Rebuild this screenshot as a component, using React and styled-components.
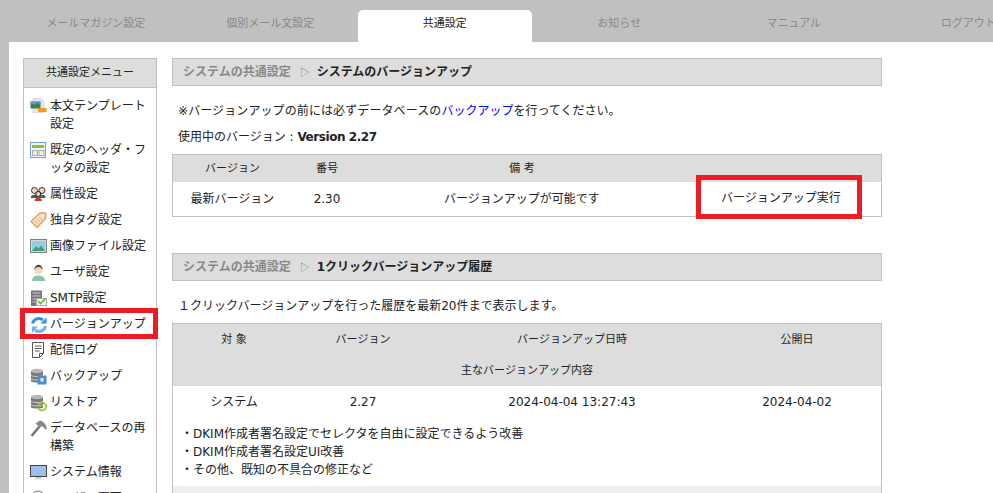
import styled, { createGlobalStyle } from "styled-components";

const GlobalStyle = createGlobalStyle`
  html, body {
    margin: 0;
    height: 493px;
    overflow: hidden;
    background-color: #c0c0c0;
    color: #222;
    font-family: "DejaVu Sans", "Noto Sans CJK JP", sans-serif;
    font-size: 12px;
    line-height: 18px;
  }
`;

const TabBar = styled.div`
  display: flex;
  height: 32px;
  padding: 10px 0 0 8.5px;
  width: 1100px;
`;

const Tab = styled.div`
  flex: 0 0 174.5px;
  height: 32px;
  line-height: 28px;
  font-size: 11px;
  text-align: center;
  color: ${(props) => (props.$active ? "#222" : "#888")};
  background-color: ${(props) => (props.$active ? "#fff" : "transparent")};
  border-radius: 5px 5px 0 0;
`;

const Page = styled.div`
  display: flex;
  align-items: flex-start;
  gap: 15px;
  margin-left: 9px;
  padding: 16px 0 0 14px;
  background-color: #fff;
  height: 500px;
`;

const Sidebar = styled.div`
  flex: 0 0 132px;
  border: 1px solid #c0c0c0;
  border-bottom: 0;
`;

const SideHead = styled.div`
  height: 28px;
  line-height: 27px;
  font-size: 11px;
  text-align: center;
  background-color: #ddd;
  border-bottom: 1px solid #c0c0c0;
`;

const SideList = styled.ul`
  list-style: none;
  margin: 0;
  padding: 5px 0 0;
`;

const SideItem = styled.li`
  position: relative;
  display: flex;
  padding: 4px 6px 4px 6px;
  &::after {
    content: ${(props) => (props.$marked ? '""' : "none")};
    position: absolute;
    left: -4px;
    right: -2px;
    top: -3px;
    bottom: -2px;
    border: 5px solid #ed1c24;
  }
`;

const IconBox = styled.span`
  flex: 0 0 20px;
  height: 18px;
  svg {
    display: block;
    margin-top: 1px;
  }
`;

const Main = styled.div`
  flex: 0 0 710px;
`;

const PanelHead = styled.div`
  box-sizing: border-box;
  height: 28px;
  line-height: 26px;
  padding-left: 10px;
  font-weight: bold;
  background-color: #ddd;
  border: 1px solid #c0c0c0;
`;

const Crumb = styled.span`
  color: #888;
`;

const CrumbArrow = styled.span`
  display: inline-block;
  box-sizing: border-box;
  width: 26px;
  padding-left: 2px;
  text-align: center;
  font-family: "Noto Sans CJK JP", sans-serif;
  font-size: 10px;
  font-weight: normal;
  color: #777;
`;

const Intro = styled.p`
  margin: ${(props) => (props.$first ? "16px" : "8px")} 0 0 6px;
`;

const SpacedText = styled.span`
  letter-spacing: 0.1px;
`;

const BlueLink = styled.a`
  color: #0000ff;
  text-decoration: none;
`;

const VersionNo = styled.b`
  letter-spacing: -0.45px;
`;

const Table = styled.table`
  width: 710px;
  margin: 8px 0 36px;
  border-collapse: separate;
  border-spacing: 0;
  table-layout: fixed;
  border: 1px solid #c0c0c0;
`;

const HeadCell = styled.th`
  height: ${(props) => props.$h}px;
  padding: 0;
  font-size: 11px;
  font-weight: normal;
  text-align: center;
  vertical-align: middle;
  background-color: ${(props) => props.$bg || "#ddd"};
`;

const Cell = styled.td`
  position: relative;
  height: ${(props) => props.$h}px;
  padding: 0;
  text-align: center;
  vertical-align: middle;
`;

const MarkedButton = styled.div`
  position: absolute;
  left: 14px;
  top: -7px;
  width: 166px;
  height: 44px;
  box-sizing: border-box;
  border: 5px solid #ed1c24;
  line-height: 36px;
  text-align: center;
  padding-left: 4px;
`;

const NoteCell = styled.td`
  padding: 8px 0 7px 8px;
  text-align: left;
`;

const Note = styled.div`
  height: 18px;
`;

const Icon = ({ children }) => (
  <IconBox>
    <svg width="18" height="18" viewBox="0 0 18 18">
      {children}
    </svg>
  </IconBox>
);

const TemplateIcon = () => (
  <Icon>
    <path d="M3 0.5h8l3 3v11H3z" fill="#e8e8e8" stroke="#d8d8d8" />
    <rect x="0.5" y="3.500" width="10" height="7" fill="#3f7f5a" />
    <path d="M0.5 3.500h10v3l-3-2-3 2-4-1z" fill="#5f9fd0" />
    <rect x="8" y="10" width="8.5" height="4" fill="#f59a1b" />
  </Icon>
);

const HeaderFooterIcon = () => (
  <Icon>
    <rect x="0.5" y="0.5" width="15" height="15" fill="#f4f4f4" stroke="#6f9fe0" />
    <rect x="2" y="3" width="12" height="3" fill="#7cc63a" />
    <rect x="2.5" y="8.5" width="5" height="5" fill="#eee" stroke="#aaa" />
    <rect x="9" y="8.5" width="5" height="5" fill="#eee" stroke="#aaa" />
  </Icon>
);

const PeopleIcon = () => (
  <Icon>
    <circle cx="4.5" cy="4.5" r="3" fill="#f0d8c8" stroke="#333" />
    <circle cx="12" cy="4.5" r="3" fill="#f0d8c8" stroke="#333" />
    <path d="M1 11c0-3 7-3 7 0v1H1zM8.5 11c0-3 7-3 7 0v1h-7z" fill="#555" />
    <circle cx="8.2" cy="8" r="2.5" fill="#f0d8c8" stroke="#222" />
    <path d="M4.5 15c0-4.500 7.500-4.500 7.500 0z" fill="#c0392b" />
  </Icon>
);

const TagIcon = () => (
  <Icon>
    <path d="M1 9.500L10 1h5.500v5.500L7 15.500z" fill="#f5e0c5" stroke="#e8a050" strokeWidth="1.400" />
    <path d="M5 9l3 3M7 7l3 3M9 5l3 3" stroke="#c9b8a0" />
    <circle cx="12.800" cy="3.700" r="1" fill="#fff" />
  </Icon>
);

const ImageIcon = () => (
  <Icon>
    <rect x="0.500" y="1.500" width="16" height="13" fill="#d8d8d8" stroke="#808080" />
    <rect x="2" y="3" width="13" height="10" fill="#8fd0e8" />
    <path d="M2 13l4-5 2.500 2.500L11 7.500 15 13z" fill="#3fa070" />
  </Icon>
);

const UserIcon = () => (
  <Icon>
    <path d="M2 17c0-4 3-5.500 6.500-5.500S15 13 15 17z" fill="#8fc4a8" />
    <circle cx="8.500" cy="6" r="4" fill="#f2d8b8" />
    <path d="M4.500 6c-.5-7 8.500-7 8 0-1-2-2-3-4-3s-3 1-4 3z" fill="#4a4a3a" />
  </Icon>
);

const SmtpIcon = () => (
  <Icon>
    <rect x="1" y="0.500" width="11" height="15.500" fill="#777" />
    <path d="M2.500 3h8M2.500 6h8M2.500 9h5M2.500 12h4" stroke="#ccc" />
    <rect x="6.500" y="8.500" width="10" height="7" fill="#f4f4f4" stroke="#aaa" />
    <path d="M8 11l2.500 2.500 5-5" fill="none" stroke="#5dbb3a" strokeWidth="1.600" />
  </Icon>
);

const RefreshIcon = () => (
  <Icon>
    <path d="M2.500 7.500a6.500 6.500 0 0 1 10.500-3.500" fill="none" stroke="#2f8fe0" strokeWidth="3" />
    <path d="M16.500 1.500v6h-6z" fill="#2f8fe0" />
    <path d="M15.500 10a6.500 6.500 0 0 1-10.500 4" fill="none" stroke="#6fb8ee" strokeWidth="3" />
    <path d="M2 17v-6.500h6z" fill="#6fb8ee" />
  </Icon>
);

const LogIcon = () => (
  <Icon>
    <path d="M2.500 0.500h11v11l-4 4h-7z" fill="#fff" stroke="#555" />
    <path d="M9.500 15.500v-4h4" fill="none" stroke="#555" />
    <path d="M5 4h6.500M5 6.500h6.500M5 9h4.500" stroke="#555" />
  </Icon>
);

const Database = () => (
  <>
    <path d="M1 3v10c0 2 12 2 12 0V3z" fill="#7a7a7a" />
    <ellipse cx="7" cy="3" rx="6" ry="2.200" fill="#b8b8b8" />
    <path d="M1 7c0 2 12 2 12 0M1 10.500c0 2 12 2 12 0" fill="none" stroke="#ccc" />
  </>
);

const BackupIcon = () => (
  <Icon>
    <Database />
    <rect x="7.500" y="7.500" width="9" height="9" fill="#4a8fd0" />
    <rect x="10.500" y="10" width="3" height="3.500" fill="#dcecf8" />
  </Icon>
);

const RestoreIcon = () => (
  <Icon>
    <Database />
    <path d="M8 12.500a4 4 0 0 1 7-2.500" fill="none" stroke="#8fd030" strokeWidth="2" />
    <path d="M15.500 10a4 4 0 0 1-7 4.500" fill="none" stroke="#8fd030" strokeWidth="2" />
  </Icon>
);

const HammerIcon = () => (
  <Icon>
    <path d="M1.500 16L9.500 6.500" stroke="#777" strokeWidth="2.600" />
    <path d="M5.500 3.500L10 0.500c3 .5 6 3.500 7 8l-1.500 1-3.500-3.500-2 1.500z" fill="#8a8a8a" />
  </Icon>
);

const MonitorIcon = () => (
  <Icon>
    <rect x="0.500" y="1.500" width="16" height="11" fill="#9cc0ec" stroke="#444" />
    <rect x="6" y="13" width="5" height="1.500" fill="#bbb" />
    <rect x="3.500" y="14.500" width="10" height="1" fill="#ddd" />
  </Icon>
);

const ClockIcon = () => (
  <Icon>
    <circle cx="8" cy="8" r="7" fill="#f4f4f4" stroke="#777" />
    <path d="M8 3.500V8h3.500" fill="none" stroke="#555" />
  </Icon>
);

const tabs = ["メールマガジン設定", "個別メール文設定", "共通設定", "お知らせ", "マニュアル", "ログアウト"];

const menu = [
  { label: "本文テンプレート設定", icon: TemplateIcon },
  { label: "既定のヘッダ・フッタの設定", icon: HeaderFooterIcon },
  { label: "属性設定", icon: PeopleIcon },
  { label: "独自タグ設定", icon: TagIcon },
  { label: "画像ファイル設定", icon: ImageIcon },
  { label: "ユーザ設定", icon: UserIcon },
  { label: "SMTP設定", icon: SmtpIcon },
  { label: "バージョンアップ", icon: RefreshIcon, marked: true },
  { label: "配信ログ", icon: LogIcon },
  { label: "バックアップ", icon: BackupIcon },
  { label: "リストア", icon: RestoreIcon },
  { label: "データベースの再構築", icon: HammerIcon },
  { label: "システム情報", icon: MonitorIcon },
  { label: "ユーザー画面", icon: ClockIcon },
];

export default function App() {
  return (
    <>
      <GlobalStyle />
      <TabBar>
        {tabs.map((tab) => (
          <Tab key={tab} $active={tab === "共通設定"}>
            {tab}
          </Tab>
        ))}
      </TabBar>
      <Page>
        <Sidebar>
          <SideHead>共通設定メニュー</SideHead>
          <SideList>
            {menu.map((item) => (
              <SideItem key={item.label} $marked={item.marked}>
                <item.icon />
                <span>{item.label}</span>
              </SideItem>
            ))}
          </SideList>
        </Sidebar>
        <Main>
          <PanelHead>
            <Crumb>システムの共通設定</Crumb>
            <CrumbArrow>▷</CrumbArrow>
            システムのバージョンアップ
          </PanelHead>
          <Intro $first>
            <SpacedText>※バージョンアップの前には必ずデータベースの</SpacedText>
            <BlueLink href="#backup">バックアップ</BlueLink>
            を行ってください。
          </Intro>
          <Intro>
            使用中のバージョン : <VersionNo>Version 2.27</VersionNo>
          </Intro>
          <Table>
            <colgroup>
              <col width="119" />
              <col width="70" />
              <col width="320" />
              <col width="199" />
            </colgroup>
            <thead>
              <tr>
                <HeadCell $h={27}>バージョン</HeadCell>
                <HeadCell $h={27}>番号</HeadCell>
                <HeadCell $h={27}>備 考</HeadCell>
                <HeadCell $h={27} />
              </tr>
            </thead>
            <tbody>
              <tr>
                <Cell $h={34}>最新バージョン</Cell>
                <Cell $h={34}>2.30</Cell>
                <Cell $h={34}>バージョンアップが可能です</Cell>
                <Cell $h={34}>
                  <MarkedButton>バージョンアップ実行</MarkedButton>
                </Cell>
              </tr>
            </tbody>
          </Table>
          <PanelHead>
            <Crumb>システムの共通設定</Crumb>
            <CrumbArrow>▷</CrumbArrow>
            1クリックバージョンアップ履歴
          </PanelHead>
          <Intro $first>１クリックバージョンアップを行った履歴を最新20件まで表示します。</Intro>
          <Table>
            <colgroup>
              <col width="122" />
              <col width="136" />
              <col width="282" />
              <col width="168" />
            </colgroup>
            <thead>
              <tr>
                <HeadCell $h={31}>対 象</HeadCell>
                <HeadCell $h={31}>バージョン</HeadCell>
                <HeadCell $h={31}>バージョンアップ日時</HeadCell>
                <HeadCell $h={31}>公開日</HeadCell>
              </tr>
              <tr>
                <HeadCell $h={31} colSpan={4}>
                  主なバージョンアップ内容
                </HeadCell>
              </tr>
            </thead>
            <tbody>
              <tr>
                <Cell $h={31}>システム</Cell>
                <Cell $h={31}>2.27</Cell>
                <Cell $h={31}>2024-04-04 13:27:43</Cell>
                <Cell $h={31}>2024-04-02</Cell>
              </tr>
              <tr>
                <NoteCell colSpan={4}>
                  <Note>・DKIM作成者署名設定でセレクタを自由に設定できるよう改善</Note>
                  <Note>・DKIM作成者署名設定UI改善</Note>
                  <Note>・その他、既知の不具合の修正など</Note>
                </NoteCell>
              </tr>
              <tr>
                <HeadCell $h={31} $bg="#eee" colSpan={4} />
              </tr>
            </tbody>
          </Table>
        </Main>
      </Page>
    </>
  );
}
